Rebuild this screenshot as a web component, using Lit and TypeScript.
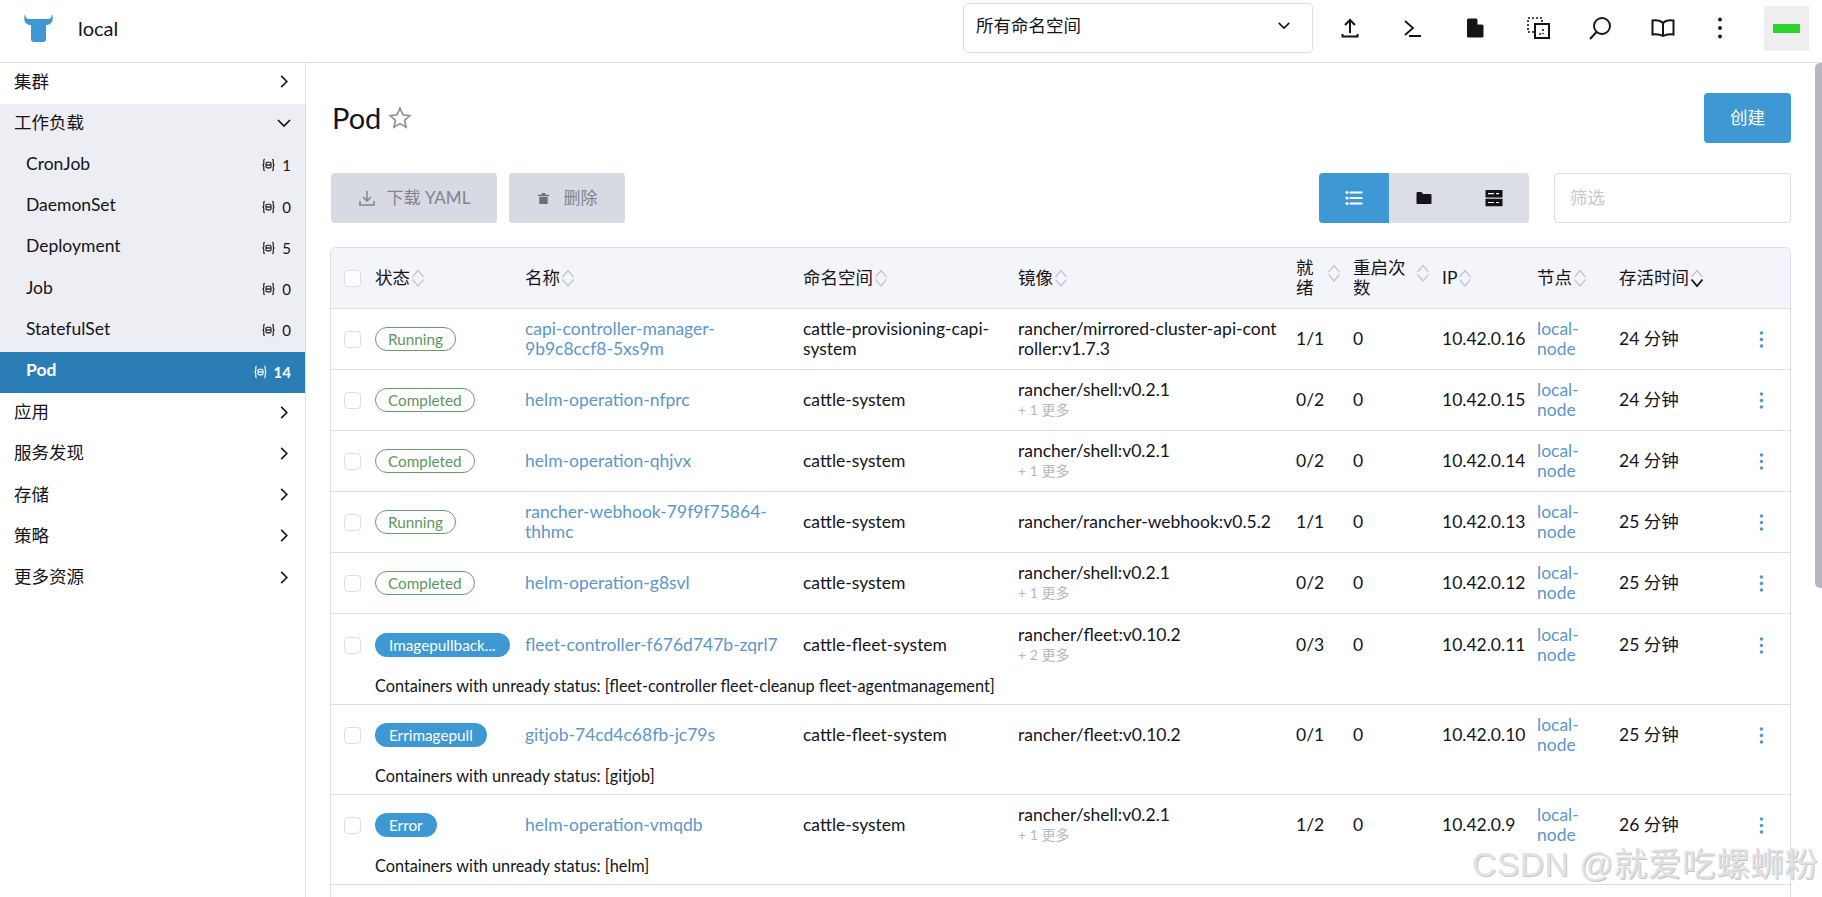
import { LitElement, html, css } from "lit";
import { customElement } from "lit/decorators.js";

const chevR = html`<svg class="chev" viewBox="0 0 10 16"><path d="M2 2l6 6-6 6" fill="none" stroke="currentColor" stroke-width="1.7"/></svg>`;
const chevD = html`<svg class="chev" viewBox="0 0 16 10"><path d="M2 2l6 6 6-6" fill="none" stroke="currentColor" stroke-width="1.7"/></svg>`;
const nsIcon = html`<svg class="nsi" viewBox="0 0 16 14"><path d="M4 1C2.500 1 3 3 3 5S1.500 7 1.500 7 3 7 3 9s-.5 4 1 4M12 1c1.500 0 1 2 1 4s1.500 2 1.500 2S13 7 13 9s.5 4-1 4" fill="none" stroke="currentColor" stroke-width="1.200"/><rect x="5.300" y="4" width="5.400" height="6" rx="1.500" fill="none" stroke="currentColor" stroke-width="1.200"/><path d="M5.500 7h5" stroke="currentColor" stroke-width="1.400"/></svg>`;
const sort = (active = false) => html`<svg class="sort" viewBox="0 0 14 20"><path d="M1.500 9L7 2.500 12.500 9" fill="none" stroke="#c4c5cc" stroke-width="1.200"/><path d="M1.500 11.500L7 18l5.500-6.500" fill="none" stroke="${active ? "#141419" : "#c4c5cc"}" stroke-width="${active ? 1.800 : 1.200}"/></svg>`;

type Row = { st: string; kind: "ok" | "bad"; name: string; ns: string; img: string; more?: string; ready: string; ip: string; age: string; msg?: string };
const rows: Row[] = [
  { st: "Running", kind: "ok", name: "capi-controller-manager-9b9c8ccf8-5xs9m", ns: "cattle-provisioning-capi-system", img: "rancher/mirrored-cluster-api-controller:v1.7.3", ready: "1/1", ip: "10.42.0.16", age: "24 分钟" },
  { st: "Completed", kind: "ok", name: "helm-operation-nfprc", ns: "cattle-system", img: "rancher/shell:v0.2.1", more: "+ 1 更多", ready: "0/2", ip: "10.42.0.15", age: "24 分钟" },
  { st: "Completed", kind: "ok", name: "helm-operation-qhjvx", ns: "cattle-system", img: "rancher/shell:v0.2.1", more: "+ 1 更多", ready: "0/2", ip: "10.42.0.14", age: "24 分钟" },
  { st: "Running", kind: "ok", name: "rancher-webhook-79f9f75864-thhmc", ns: "cattle-system", img: "rancher/rancher-webhook:v0.5.2", ready: "1/1", ip: "10.42.0.13", age: "25 分钟" },
  { st: "Completed", kind: "ok", name: "helm-operation-g8svl", ns: "cattle-system", img: "rancher/shell:v0.2.1", more: "+ 1 更多", ready: "0/2", ip: "10.42.0.12", age: "25 分钟" },
  { st: "Imagepullback...", kind: "bad", name: "fleet-controller-f676d747b-zqrl7", ns: "cattle-fleet-system", img: "rancher/fleet:v0.10.2", more: "+ 2 更多", ready: "0/3", ip: "10.42.0.11", age: "25 分钟", msg: "Containers with unready status: [fleet-controller fleet-cleanup fleet-agentmanagement]" },
  { st: "Errimagepull", kind: "bad", name: "gitjob-74cd4c68fb-jc79s", ns: "cattle-fleet-system", img: "rancher/fleet:v0.10.2", ready: "0/1", ip: "10.42.0.10", age: "25 分钟", msg: "Containers with unready status: [gitjob]" },
  { st: "Error", kind: "bad", name: "helm-operation-vmqdb", ns: "cattle-system", img: "rancher/shell:v0.2.1", more: "+ 1 更多", ready: "1/2", ip: "10.42.0.9", age: "26 分钟", msg: "Containers with unready status: [helm]" },
];
const widths = [44, 150, 278, 215, 278, 57, 89, 95, 82, 135, 36];
const heads: [string, string, boolean?][] = [["状态", ""], ["名称", ""], ["命名空间", ""], ["镜像", ""], ["就绪", "w1"], ["重启次数", "w3"], ["IP", ""], ["节点", ""], ["存活时间", "", true]];

@customElement("app-root")
export class AppRoot extends LitElement {
  static styles = css`
    :host { display: block; width: 1822px; height: 897px; overflow: hidden; position: relative; background: #fff; color: #141419;
      font-family: Lato, "Noto Sans CJK SC", sans-serif; font-size: 17.5px; line-height: 20px; }
    * { box-sizing: border-box; }
    .top { height: 63px; border-bottom: 1px solid #dcdee7; display: flex; align-items: center; padding-bottom: 6px; }
    .logo { width: 31px; height: 28px; margin-left: 23px; flex: none; }
    .cluster { margin-left: 24px; font-size: 20px; flex: 1; }
    .nsbox { width: 350px; height: 50px; border: 1px solid #dcdee7; border-radius: 5px; display: flex; align-items: center; justify-content: space-between; padding: 0 21px 5px 12px; margin-right: 6px; }
    .nsbox .chev { width: 14px; height: 9px; }
    .tools { display: flex; align-items: center; }
    .tool { width: 62.500px; height: 40px; display: flex; align-items: center; justify-content: center; }
    .tool svg { width: 24px; height: 24px; }
    .tool.dots { width: 52px; }
    .user { width: 45px; height: 45px; background: #eeeeee; margin: 0 13px 0 18px; display: flex; align-items: center; justify-content: center; }
    .user i { display: block; width: 27px; height: 9px; background: #2ed42e; }
    .body { display: flex; height: 834px; }
    .side { width: 306px; flex: none; border-right: 1px solid #dcdee7; }
    .it { height: 41.300px; display: flex; align-items: center; justify-content: space-between; padding: 0 16px 4px 14px; }
    .it .chev { width: 10px; height: 15px; flex: none; }
    .it.open .chev { width: 16px; height: 10px; margin-right: -3px; }
    .open, .sub { background: #edeef3; }
    .sub { padding: 0 14px 5px 26px; }
    .sub.on { background: #2a7db5; color: #fff; font-weight: 700; }
    .cnt { display: flex; align-items: center; gap: 6px; font-size: 15px; padding-top: 3px; }
    .nsi { width: 15px; height: 14px; }
    .main { flex: 1; padding: 30px 24px 0 24px; min-width: 0; }
    .track { width: 7px; flex: none; }
    .thumb { background: #b6b7c3; border-radius: 5px 0 0 5px; height: 525px; }
    .title { display: flex; justify-content: space-between; align-items: center; height: 50px; }
    .title h1 { margin: 0; font-weight: 400; font-size: 29px; line-height: 50px; display: flex; align-items: center; gap: 6px; padding-left: 2px; }
    .star { width: 26px; height: 26px; }
    .btn { border-radius: 4px; display: flex; align-items: center; justify-content: center; }
    .create { width: 87px; height: 50px; background: #3d98d3; color: #fff; }
    .bar { display: flex; align-items: center; margin-top: 30px; height: 50px; }
    .dis { height: 50px; background: #d8dae3; color: #7f8390; font-size: 17px; gap: 11px; }
    .dl { width: 166px; margin-left: 1px; } .del { width: 116px; margin-left: 12px; gap: 14px; }
    .dl svg { width: 18px; height: 18px; } .del svg { width: 13px; height: 13px; }
    .seg { display: flex; margin-left: auto; height: 50px; border-radius: 4px; overflow: hidden; background: #dcdee7; }
    .seg div { width: 70px; display: flex; align-items: center; justify-content: center; }
    .seg svg { width: 18px; height: 18px; }
    .seg .on { background: #3d98d3; }
    .filter { width: 237px; height: 50px; margin-left: 25px; border: 1px solid #dcdee7; border-radius: 4px; color: #c4c6d0; display: flex; align-items: center; padding-left: 15px; }
    table { table-layout: fixed; width: 1461px; border-collapse: separate; border-spacing: 0; margin-top: 24px; border: 1px solid #dcdee7; border-bottom: 0; border-radius: 6px 6px 0 0; }
    th { background: #f4f5fa; height: 61px; font-weight: 400; text-align: left; padding: 0 6px 0 0; border-bottom: 1px solid #dcdee7; line-height: 20px; }
    th:first-child { border-top-left-radius: 6px; } th:last-child { border-top-right-radius: 6px; }
    .th { display: flex; align-items: center; }
    .w1 { width: 1em; } .w3 { width: 3em; }
    .sort { width: 14px; height: 20px; flex: none; margin-left: 1px; }
    .th.wrap { justify-content: space-between; padding-right: 6px; }
    .th.wrap .sort { margin-top: -10px; }
    td { height: 61.100px; padding: 0 10px 0 0; vertical-align: middle; border-bottom: 1px solid #dcdee7; }
    td.c, th.c { padding-left: 13px; padding-right: 0; }
    tr.hasmsg td { border-bottom: 0; }
    td.msg { height: 28.500px; padding: 0 0 8px 0; font-size: 16.300px; border-bottom: 1px solid #dcdee7; }
    .cb { display: block; width: 17px; height: 17px; border: 1px solid #dcdee7; border-radius: 4px; background: #fff; }
    .badge { display: inline-flex; align-items: center; height: 24px; padding: 0 12px; border-radius: 13px; font-size: 15.300px; white-space: nowrap; vertical-align: middle; }
    .badge.ok { border: 1px solid #6a9c6a; color: #5f9560; }
    .badge.bad { background: #3d98d3; color: #fff; padding: 0 14px; }
    .link { color: #5b97c9; }
    td.break { word-break: break-all; padding-right: 14px; }
    .more { font-size: 14px; color: #b6b8c2; line-height: 20px; }
    .kebab { width: 5px; height: 19px; display: block; margin-left: 4.500px; }
    .wm { position: absolute; left: 1472px; top: 843px; font-family: "Liberation Sans", "Noto Sans CJK SC", sans-serif; font-size: 33.500px; line-height: 44px; white-space: nowrap; color: #e2e2e2; text-shadow: 1px 1px 0 #c6c6c6; letter-spacing: .6px; }
  `;

  render() {
    return html`
      <div class="top">
        <svg class="logo" viewBox="0 0 31 28"><path d="M2 0C.5 4 .5 11 8 11v14a3 3 0 0 0 3 3h9a3 3 0 0 0 3-3V11c7.500 0 7.500-7 6-11-.3 2.500-1 5-4 5H6C3 5 2.300 2.500 2 0z" fill="#3d98d3"/></svg>
        <div class="cluster">local</div>
        <div class="nsbox"><span>所有命名空间</span>${chevD}</div>
        <div class="tools">
          <div class="tool"><svg viewBox="0 0 24 24"><path d="M12 17V4M7 9l5-5 5 5M4.500 18v2.500h15V18" fill="none" stroke="#141419" stroke-width="2"/></svg></div>
          <div class="tool"><svg viewBox="0 0 24 24"><path d="M4 5l8 7-8 7M8 20h12" fill="none" stroke="#141419" stroke-width="1.800"/></svg></div>
          <div class="tool"><svg viewBox="0 0 24 24"><path d="M5.500 2.500h8l7 7V20a1.500 1.500 0 0 1-1.500 1.500H5.500A1.500 1.500 0 0 1 4 20V4a1.500 1.500 0 0 1 1.500-1.500z" fill="#141419"/><path d="M14.500 2.500v6h6z" fill="#fff"/></svg></div>
          <div class="tool"><svg viewBox="0 0 24 24"><path d="M8 16H2V2h14v5" fill="none" stroke="#141419" stroke-width="1.600" stroke-dasharray="2 2"/><rect x="9" y="8" width="14" height="14" fill="none" stroke="#141419" stroke-width="2"/><path d="M17 13v2M17 17v1M13 18h2" stroke="#141419" stroke-width="1.600"/></svg></div>
          <div class="tool"><svg viewBox="0 0 24 24"><circle cx="14" cy="10" r="8" fill="none" stroke="#141419" stroke-width="1.900"/><path d="M8.500 16L2 23" stroke="#141419" stroke-width="2"/></svg></div>
          <div class="tool"><svg viewBox="0 0 24 24"><path d="M12 7C10 5 6 4 1.500 4.500V18.500c4-.5 8 0 10.500 1.500 2.500-1.500 6.500-2 10.500-1.500V4.500C18 4 14 5 12 7zM12 7v13" fill="none" stroke="#141419" stroke-width="2"/></svg></div>
          <div class="tool dots"><svg viewBox="0 0 24 24"><circle cx="12" cy="3.500" r="2" fill="#141419"/><circle cx="12" cy="12" r="2" fill="#141419"/><circle cx="12" cy="20.500" r="2" fill="#141419"/></svg></div>
        </div>
        <div class="user"><i></i></div>
      </div>
      <div class="body">
        <nav class="side">
          <div class="it"><span>集群</span>${chevR}</div>
          <div class="it open"><span>工作负载</span>${chevD}</div>
          ${[["CronJob", 1], ["DaemonSet", 0], ["Deployment", 5], ["Job", 0], ["StatefulSet", 0], ["Pod", 14]].map(([n, c]) => html`
            <div class="it sub ${n === "Pod" ? "on" : ""}"><span>${n}</span><span class="cnt">${nsIcon}${c}</span></div>`)}
          ${["应用", "服务发现", "存储", "策略", "更多资源"].map((n) => html`<div class="it"><span>${n}</span>${chevR}</div>`)}
        </nav>
        <main class="main">
          <div class="title">
            <h1>Pod <svg class="star" viewBox="0 0 24 24"><path d="M12 3l2.700 6 6.300.7-4.700 4.300 1.300 6.500L12 17.200 6.400 20.500l1.300-6.500L3 9.700 9.300 9z" fill="none" stroke="#8a8c96" stroke-width="1.500"/></svg></h1>
            <div class="btn create">创建</div>
          </div>
          <div class="bar">
            <div class="btn dis dl"><svg viewBox="0 0 18 18"><path d="M9 2v10M5 8l4 4 4-4M2 12v4h14v-4" fill="none" stroke="#7f8390" stroke-width="1.500"/></svg>下载 YAML</div>
            <div class="btn dis del"><svg viewBox="0 0 14 14"><path d="M1 3h12v1.500H1zM5 1h4v2H5zM2.500 5.500h9V13h-9z" fill="#6a6e7a"/></svg>删除</div>
            <div class="seg">
              <div class="on"><svg viewBox="0 0 18 18"><g fill="#fff"><circle cx="2" cy="3.500" r="1.600"/><circle cx="2" cy="9" r="1.600"/><circle cx="2" cy="14.500" r="1.600"/><rect x="4.500" y="2.400" width="13" height="2.200" rx=".5"/><rect x="4.500" y="7.900" width="13" height="2.200" rx=".5"/><rect x="4.500" y="13.400" width="13" height="2.200" rx=".5"/></g></svg></div>
              <div><svg viewBox="0 0 18 18"><path d="M1.500 4a1 1 0 0 1 1-1h4l1.500 2h7.500a1 1 0 0 1 1 1v8a1 1 0 0 1-1 1h-13a1 1 0 0 1-1-1z" fill="#141419"/></svg></div>
              <div><svg viewBox="0 0 18 18"><rect x=".5" y="1" width="17" height="7.400" rx=".5" fill="#141419"/><rect x=".5" y="9.800" width="17" height="7.400" rx=".5" fill="#141419"/><path d="M3 4.700h6M11 4.700h3M3 13.500h6M11 13.500h3" stroke="#fff" stroke-width="1.200"/></svg></div>
            </div>
            <div class="filter">筛选</div>
          </div>
          <table>
            <colgroup>${widths.map((w) => html`<col style="width:${w}px">`)}</colgroup>
            <thead><tr>
              <th class="c"><span class="cb"></span></th>
              ${heads.map(([t, w, a]) => html`<th><div class="th ${w ? "wrap" : ""}"><span class="${w}">${t}</span>${sort(!!a)}</div></th>`)}
              <th></th>
            </tr></thead>
            <tbody>
              ${rows.map((r) => html`
                <tr class="${r.msg ? "hasmsg" : ""}">
                  <td class="c"><span class="cb"></span></td>
                  <td><span class="badge ${r.kind}">${r.st}</span></td>
                  <td class="link">${r.name}</td>
                  <td>${r.ns}</td>
                  <td class="break">${r.img}${r.more ? html`<div class="more">${r.more}</div>` : ""}</td>
                  <td>${r.ready}</td>
                  <td>0</td>
                  <td>${r.ip}</td>
                  <td class="link">local-node</td>
                  <td>${r.age}</td>
                  <td><svg class="kebab" viewBox="0 0 5 19"><g fill="#5b97c9"><circle cx="2.500" cy="3" r="1.800"/><circle cx="2.500" cy="9.500" r="1.800"/><circle cx="2.500" cy="16" r="1.800"/></g></svg></td>
                </tr>
                ${r.msg ? html`<tr><td class="msg"></td><td class="msg" colspan="10">${r.msg}</td></tr>` : ""}
              `)}
              <tr><td colspan="11"></td></tr>
            </tbody>
          </table>
        </main>
        <div class="track"><div class="thumb"></div></div>
      </div>
      <div class="wm">CSDN @就爱吃螺蛳粉</div>
    `;
  }
}
